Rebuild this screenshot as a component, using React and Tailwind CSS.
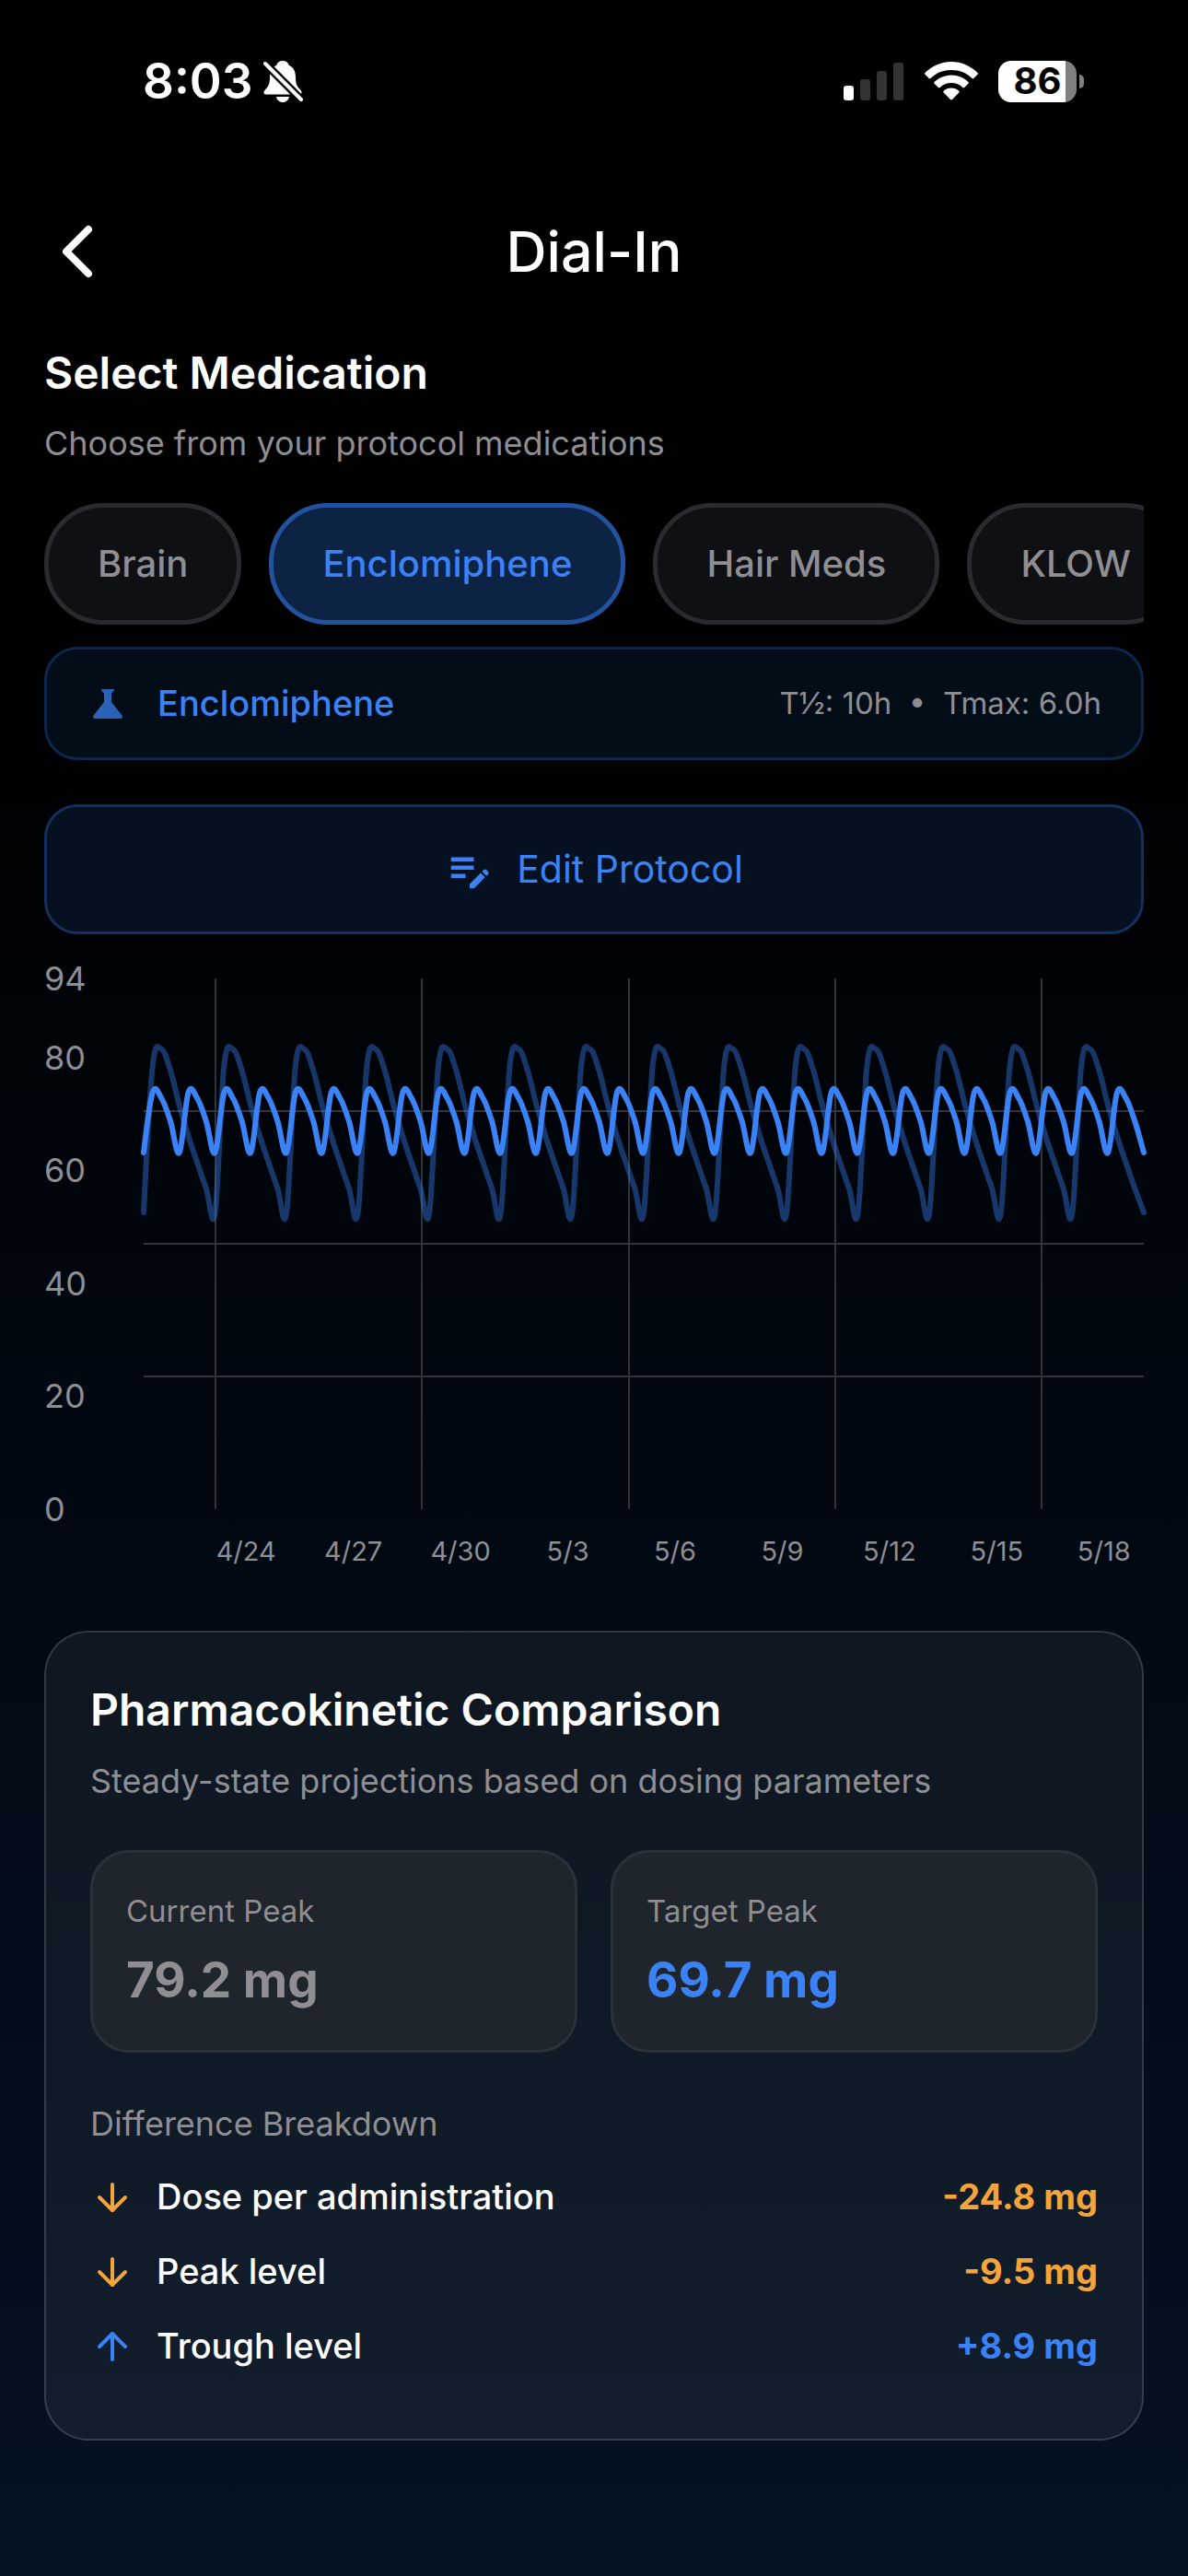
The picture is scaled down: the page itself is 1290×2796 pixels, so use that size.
import React from 'react'
import { ArrowDown, ArrowUp, ChevronLeft } from 'lucide-react'
import { MdEditNote } from 'react-icons/md'

const medications = ['Brain', 'Enclomiphene', 'Hair Meds', 'KLOW']
const yLabels = [94, 80, 60, 40, 20, 0]
const xLabels = ['4/24', '4/27', '4/30', '5/3', '5/6', '5/9', '5/12', '5/15', '5/18']

const differences = [
    { label: 'Dose per administration', value: '-24.8 mg', up: false },
    { label: 'Peak level', value: '-9.5 mg', up: false },
    { label: 'Trough level', value: '+8.9 mg', up: true },
]

// Chart space, 28 days wide with a level sampled every 6 hours
const CHART_W = 1086
const CHART_H = 576
const SAMPLES = 112
const currentCycle = [254, 95, 77, 100, 138, 171, 200, 228]
const targetCycle = [189, 124, 130, 155]

function smoothPath(cycle) {
    const points = []
    for (let i = 0; i <= SAMPLES; i++) {
        points.push([(i * CHART_W) / SAMPLES, cycle[i % cycle.length]])
    }
    let d = `M${points[0][0]} ${points[0][1]}`
    let tx = 0
    let ty = 0
    for (let i = 1; i < points.length; i++) {
        const prev = points[i - 1]
        const cur = points[i]
        const next = points[i + 1] || cur
        const c1 = [prev[0] + tx, prev[1] + ty]
        tx = ((next[0] - prev[0]) / 2) * 0.35
        ty = ((next[1] - prev[1]) / 2) * 0.35
        d += ` C${c1[0]} ${c1[1]} ${cur[0] - tx} ${cur[1] - ty} ${cur[0]} ${cur[1]}`
    }
    return d
}

function StatusBar() {
    return (
        <div className="flex items-center justify-between h-[176px] pl-[155px] pr-[113px]">
            <div className="flex items-center gap-2.5">
                <span className="text-[53px] leading-none font-semibold">8:03</span>
                <svg viewBox="0 0 44 46" className="w-11 h-[46px]" fill="none">
                    <path
                        d="M22 1c-3.400 0-6 2-6.600 4.800C10 8 8 13 8 19c0 8-2 10-5.500 14C.500 35.500 1.500 37.500 4 37.500h36c2.500 0 3.500-2 1.500-4.500C38 29 36 27 36 19c0-6-2-11-7.400-13.200C28 3 25.400 1 22 1z"
                        fill="white"
                    />
                    <path d="M15 40h14c-.500 3.500-3.500 6-7 6s-6.500-2.500-7-6z" fill="white" />
                    <path d="M3 4l39 39" stroke="black" strokeWidth="9" />
                    <path d="M3 4l39 39" stroke="white" strokeWidth="4" strokeLinecap="round" />
                </svg>
            </div>
            <div className="flex items-center">
                <svg viewBox="0 0 66 42" className="w-[66px] h-[42px]">
                    <rect x="0" y="26" width="11" height="16" rx="3" fill="white" />
                    <rect x="18" y="19" width="11" height="23" rx="3" fill="#333333" />
                    <rect x="36" y="10" width="11" height="32" rx="3" fill="#333333" />
                    <rect x="54" y="1" width="11" height="41" rx="3" fill="#333333" />
                </svg>
                <svg viewBox="0 0 58 42" className="w-[58px] h-[42px] ml-[22px] mr-[22px]" fill="white">
                    <path d="M29 0C18 0 8 4.500.500 12c-.600.600-.600 1.200 0 1.800l4.200 4.200c.500.500 1.200.500 1.800 0C12.500 12 20 9 29 9s16.500 3 22.500 9c.600.500 1.300.500 1.800 0l4.200-4.200c.600-.600.600-1.200 0-1.800C50 4.500 40 0 29 0z" />
                    <path d="M29 14.500c-7 0-13.500 2.800-18.400 7.400-.600.600-.600 1.200 0 1.800l4.200 4.200c.500.500 1.200.500 1.800 0 3.300-3 7.600-4.900 12.400-4.900s9.100 1.900 12.400 4.900c.600.500 1.300.500 1.800 0l4.200-4.200c.600-.600.600-1.200 0-1.800-4.900-4.600-11.400-7.400-18.400-7.400z" />
                    <path d="M29 28.500c-3.200 0-6 1.200-8.300 3.200-.600.500-.600 1.200 0 1.800l7.300 7.500c.600.600 1.400.600 2 0l7.300-7.500c.600-.600.600-1.300 0-1.800-2.300-2-5.100-3.200-8.300-3.200z" />
                </svg>
                <div className="flex items-center justify-center w-[85px] h-[45px] rounded-[14px] bg-linear-to-r from-white from-86% to-[#808080] to-86% text-black text-[40px] leading-none font-bold">
                    86
                </div>
                <div className="w-[5px] h-[15px] ml-[3px] rounded-r-full bg-[#808080]" />
            </div>
        </div>
    )
}

function Chart() {
    return (
        <div className="mt-12">
            <div className="flex h-[576px]">
                <div className="flex flex-col w-[108px] shrink-0 text-[36px] leading-none text-[#8e8e93]">
                    {yLabels.map((value, i) => (
                        <div key={value} className="basis-0 h-0" style={{ flexGrow: value - (yLabels[i + 1] ?? 0) }}>
                            <span className="block -translate-y-1/2">{value}</span>
                        </div>
                    ))}
                </div>
                <svg
                    viewBox={`0 0 ${CHART_W} ${CHART_H}`}
                    preserveAspectRatio="none"
                    className="flex-1 min-w-0 h-full overflow-visible"
                    fill="none"
                >
                    <g stroke="#333438" strokeWidth="2">
                        {[144, 288, 432].map((y) => (
                            <path key={y} d={`M0 ${y}H${CHART_W}`} />
                        ))}
                        {[78, 302, 527, 751, 975].map((x) => (
                            <path key={x} d={`M${x} 0V${CHART_H}`} />
                        ))}
                    </g>
                    <g strokeWidth="6" strokeLinecap="round" strokeLinejoin="round" stroke="#3b82f6">
                        <path d={smoothPath(currentCycle)} vectorEffect="non-scaling-stroke" opacity="0.4" />
                        <path d={smoothPath(targetCycle)} vectorEffect="non-scaling-stroke" />
                    </g>
                </svg>
            </div>
            <div className="grid grid-cols-9 ml-[161px] -mr-[15px] mt-[26px] mb-[66px] text-[29px] leading-10 text-center text-[#8e8e93]">
                {xLabels.map((label) => (
                    <span key={label}>{label}</span>
                ))}
            </div>
        </div>
    )
}

function PeakCard({ title, value, color }) {
    return (
        <div className="h-[220px] px-9 pt-[30px] rounded-[42px] border-3 border-[#2a3139] bg-[#1e252d]">
            <p className="text-[33px] leading-[66px] text-[#8e8e93]">{title}</p>
            <p className={`text-[53px] leading-[84px] font-bold ${color}`}>{value}</p>
        </div>
    )
}

export default function App() {
    return (
        <div className="min-h-screen bg-linear-to-b from-black via-[#01070f] to-[#051223] font-['Inter',sans-serif] text-white">
            <StatusBar />

            <header className="grid grid-cols-[96px_1fr_96px] items-center h-24 mt-[49px] px-9">
                <button aria-label="Back">
                    <ChevronLeft size={96} strokeWidth={2} />
                </button>
                <h1 className="text-center text-[61px] leading-none font-medium">Dial-In</h1>
            </header>

            <main className="px-12 pb-[147px]">
                <h2 className="mt-[51px] text-[48px] leading-[66px] font-semibold">Select Medication</h2>
                <p className="mt-4 text-[36px] leading-[54px] text-[#8e8e93]">Choose from your protocol medications</p>

                <div className="flex gap-[30px] mt-[38px] overflow-hidden">
                    {medications.map((name) => (
                        <button
                            key={name}
                            className={
                                name === 'Enclomiphene'
                                    ? 'shrink-0 h-[132px] px-[53px] rounded-[64px] border-5 border-[#23529f] bg-[#0d2344] text-[40px] font-medium text-[#3b82f6]'
                                    : 'shrink-0 h-[132px] px-[53px] rounded-[64px] border-5 border-[#292b2e] bg-[#0e1013] text-[40px] font-medium text-[#8e8e93]'
                            }
                        >
                            {name}
                        </button>
                    ))}
                </div>

                <div className="flex items-center h-[123px] mt-6 pl-[50px] pr-[43px] rounded-[36px] border-3 border-[#0d264b] bg-[#030d18]">
                    <svg viewBox="0 0 32 32" className="w-8 h-8" fill="#2a62b8">
                        <path d="M9.500 0h13c.600 0 .600 1 0 2L20 5v9l11.500 14.500c1 1.500.500 3.500-1.500 3.500H2c-2 0-2.500-2-1.500-3.500L12 14V5L9.500 2c-.600-1-.600-2 0-2z" />
                    </svg>
                    <span className="ml-[38px] text-[38px] font-medium text-[#3b82f6]">Enclomiphene</span>
                    <span className="ml-auto text-[33px] text-[#8e8e93] whitespace-pre">T½: 10h  •  Tmax: 6.0h</span>
                </div>

                <button className="flex items-center justify-center gap-6 w-full h-[141px] mt-12 rounded-[36px] border-3 border-[#14305f] bg-[#051121] text-[41px] text-[#3b82f6]">
                    <MdEditNote size={54} />
                    Edit Protocol
                </button>

                <Chart />

                <section className="px-12 pt-12 pb-[60px] rounded-[48px] border-2 border-white/15 bg-white/[0.055]">
                    <h2 className="text-[48px] leading-[72px] font-semibold">Pharmacokinetic Comparison</h2>
                    <p className="mt-3.5 text-[36px] leading-[54px] text-[#8e8e93]">
                        Steady-state projections based on dosing parameters
                    </p>
                    <div className="grid grid-cols-2 gap-9 mt-12">
                        <PeakCard title="Current Peak" value="79.2 mg" color="text-[#8e8e93]" />
                        <PeakCard title="Target Peak" value="69.7 mg" color="text-[#3b82f6]" />
                    </div>
                    <h3 className="mt-[50px] text-[36px] leading-[54px] text-[#8e8e93]">Difference Breakdown</h3>
                    <ul className="mt-3">
                        {differences.map(({ label, value, up }) => (
                            <li key={label} className="flex items-center h-[81px] text-[38px]">
                                {up ? (
                                    <ArrowUp size={48} className="text-[#3b82f6]" />
                                ) : (
                                    <ArrowDown size={48} className="text-[#f5a33b]" />
                                )}
                                <span className="ml-6 font-medium">{label}</span>
                                <span className={up ? 'ml-auto font-bold text-[#3b82f6]' : 'ml-auto font-bold text-[#f5a33b]'}>
                                    {value}
                                </span>
                            </li>
                        ))}
                    </ul>
                </section>
            </main>
        </div>
    )
}
